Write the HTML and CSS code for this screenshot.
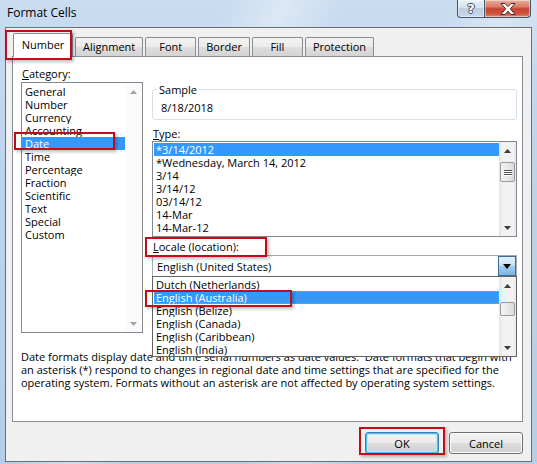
FILE: index.html
```html
<!DOCTYPE html>
<html>
<head>
<meta charset="utf-8">
<title>Format Cells</title>
<link rel="stylesheet" href="styles.css">
</head>
<body>
<div class="window">
  <div class="titlebar">
    <span class="title">Format Cells</span>
    <div class="caption-btns">
      <div class="cbtn help"><span class="qmark">?</span></div>
      <div class="cbtn close">
        <svg width="16" height="12" viewBox="0 0 16 12"><polygon points="1,0.5 5,0.5 8,3.6 11,0.5 15,0.5 10.3,5.8 15,11.5 11,11.5 8,8.2 5,11.5 1,11.5 5.7,5.8" fill="#ffffff" stroke="#4a2b2b" stroke-width="1" stroke-linejoin="round"/></svg>
      </div>
    </div>
  </div>

  <div class="dialog">
    <div class="tabs">
      <div class="tab active">Number</div>
      <div class="tab">Alignment</div>
      <div class="tab">Font</div>
      <div class="tab">Border</div>
      <div class="tab">Fill</div>
      <div class="tab">Protection</div>
    </div>

    <div class="panel">
      <div class="cols">
        <div class="col-left">
          <div class="label"><u>C</u>ategory:</div>
          <div class="listbox cat">
            <ul class="items">
              <li>General</li>
              <li>Number</li>
              <li>Currency</li>
              <li>Accounting</li>
              <li class="sel">Date</li>
              <li>Time</li>
              <li>Percentage</li>
              <li>Fraction</li>
              <li>Scientific</li>
              <li>Text</li>
              <li>Special</li>
              <li>Custom</li>
            </ul>
            <div class="vscroll plain">
              <div class="arrow"><svg width="7" height="4" viewBox="0 0 7 4"><polygon points="0,4 3.5,0 7,4" fill="#a3a3a3"/></svg></div>
              <div class="track"></div>
              <div class="arrow"><svg width="7" height="4" viewBox="0 0 7 4"><polygon points="0,0 3.5,4 7,0" fill="#a3a3a3"/></svg></div>
            </div>
          </div>
        </div>

        <div class="col-right">
          <fieldset class="sample">
            <legend>Sample</legend>
            <div class="sample-val">8/18/2018</div>
          </fieldset>

          <div class="label type-label"><u>T</u>ype:</div>
          <div class="listbox type">
            <ul class="items">
              <li class="sel">*3/14/2012</li>
              <li>*Wednesday, March 14, 2012</li>
              <li>3/14</li>
              <li>3/14/12</li>
              <li>03/14/12</li>
              <li>14-Mar</li>
              <li>14-Mar-12</li>
            </ul>
            <div class="vscroll">
              <div class="arrow"><svg width="7" height="4" viewBox="0 0 7 4"><polygon points="0,4 3.5,0 7,4" fill="#3c3c3c"/></svg></div>
              <div class="thumb t-type"><span></span><span></span><span></span></div>
              <div class="track"></div>
              <div class="arrow"><svg width="7" height="4" viewBox="0 0 7 4"><polygon points="0,0 3.5,4 7,0" fill="#3c3c3c"/></svg></div>
            </div>
          </div>

          <div class="label locale-label"><u>L</u>ocale (location):</div>
          <div class="combo-wrap">
            <div class="combo">
              <span class="combo-text">English (United States)</span>
              <div class="dd-btn"><svg width="8" height="5" viewBox="0 0 8 5"><polygon points="0,0 8,0 4,5" fill="#000"/></svg></div>
            </div>
            <div class="dropdown">
              <ul class="items">
                <li>Dutch (Netherlands)</li>
                <li class="sel focus">English (Australia)</li>
                <li>English (Belize)</li>
                <li>English (Canada)</li>
                <li>English (Caribbean)</li>
                <li>English (India)</li>
              </ul>
              <div class="vscroll">
                <div class="arrow"><svg width="7" height="4" viewBox="0 0 7 4"><polygon points="0,4 3.5,0 7,4" fill="#3c3c3c"/></svg></div>
                <div class="gap-top"></div>
                <div class="thumb t-drop"></div>
                <div class="track"></div>
                <div class="arrow"><svg width="7" height="4" viewBox="0 0 7 4"><polygon points="0,0 3.5,4 7,0" fill="#3c3c3c"/></svg></div>
              </div>
            </div>
          </div>
        </div>
      </div>

      <p class="desc">Date formats display date and time serial numbers as date values.&nbsp; Date formats that begin with an asterisk (*) respond to changes in regional date and time settings that are specified for the operating system. Formats without an asterisk are not affected by operating system settings.</p>
    </div>

    <div class="buttons">
      <button class="btn default">OK</button>
      <button class="btn">Cancel</button>
    </div>
  </div>

  <div class="mark m-tab"></div>
  <div class="mark m-date"></div>
  <div class="mark m-locale"></div>
  <div class="mark m-aus"></div>
  <div class="mark m-ok"></div>
</div>
</body>
</html>
```

FILE: styles.css
```css
* { box-sizing: border-box; }

html, body {
  margin: 0;
  padding: 0;
}

body {
  width: 537px;
  height: 464px;
  overflow: hidden;
  font-family: "Open Sans", "Noto Sans", sans-serif;
  font-size: 11px;
  color: #000;
  background: linear-gradient(180deg, #c9dcf0 0%, #bed4ec 35%, #b6cde7 100%);
}

.window {
  position: relative;
  width: 537px;
  height: 464px;
  display: flex;
  flex-direction: column;
  background:
    linear-gradient(115deg, rgba(255,255,255,0) 30%, rgba(255,255,255,0.35) 38%, rgba(255,255,255,0) 46%, rgba(255,255,255,0) 60%, rgba(255,255,255,0.3) 68%, rgba(255,255,255,0) 76%);
}

/* title bar */
.titlebar {
  height: 27px;
  display: flex;
  align-items: flex-start;
}

.title {
  margin: 5px 0 0 7px;
  font-size: 12px;
  line-height: 16px;
  color: #000;
}

.caption-btns {
  margin-left: auto;
  margin-right: 6px;
  display: flex;
}

.cbtn {
  height: 18px;
  border: 1px solid #44546a;
  border-top: none;
  display: flex;
  align-items: center;
  justify-content: center;
  box-shadow: inset 0 0 0 1px rgba(255,255,255,0.45);
}

.help {
  width: 27px;
  border-right: none;
  border-radius: 0 0 0 4px;
  background: linear-gradient(180deg, #e8eff8 0%, #d7e2ee 45%, #bccde1 50%, #c9d8e9 100%);
}

.qmark {
  font-family: "DejaVu Sans", sans-serif;
  font-weight: bold;
  font-size: 13px;
  line-height: 14px;
  color: #fff;
  text-shadow: -1px 0 #3e4a5c, 1px 0 #3e4a5c, 0 -1px #3e4a5c, 0 1px #3e4a5c;
}

.close {
  width: 47px;
  border-radius: 0 0 4px 0;
  background: linear-gradient(180deg, #eab0a0 0%, #db7a66 40%, #c8432f 52%, #cd5440 80%, #dc8a72 100%);
}

/* dialog body */
.dialog {
  flex: 1;
  margin: 0 5px 2px;
  background: #f0f0f0;
  border: 1px solid #6e6e6e;
  display: flex;
  flex-direction: column;
}

.tabs {
  height: 28px;
  display: flex;
  align-items: flex-end;
  padding-left: 7px;
  gap: 2px;
}

.tab {
  height: 19px;
  min-width: 51px;
  padding: 0 7px;
  text-align: center;
  line-height: 17px;
  border: 1px solid #898c95;
  border-bottom: none;
  border-radius: 2px 2px 0 0;
  background: linear-gradient(180deg, #f3f3f3 0%, #ebebeb 50%, #dddddd 51%, #d4d4d4 100%);
  white-space: nowrap;
}

.tab.active {
  height: 24px;
  width: 60px;
  margin-bottom: -1px;
  position: relative;
  z-index: 1;
  background: #fff;
  line-height: 22px;
}

.panel {
  margin-left: 6px;
  width: 511px;
  height: 366px;
  background: #fff;
  border: 1px solid #898c95;
}

.cols {
  display: flex;
  gap: 9px;
  padding: 10px 5px 0 8px;
}

.col-left {
  width: 122px;
  display: flex;
  flex-direction: column;
}

.col-right {
  width: 365px;
  display: flex;
  flex-direction: column;
  padding-top: 16px;
}

.label {
  line-height: 13px;
  height: 13px;
  margin-bottom: 2px;
  padding-left: 1px;
  white-space: nowrap;
}

.label u { text-decoration: underline; }

ul.items {
  list-style: none;
  margin: 0;
  flex: 1;
  min-width: 0;
}

ul.items li {
  height: 13px;
  line-height: 13px;
  white-space: nowrap;
  overflow: hidden;
}

ul.items li.sel {
  background: #3399ff;
  color: #fff;
}

.listbox {
  display: flex;
  border: 1px solid #828790;
  background: #fff;
}

.listbox.cat { height: 251px; }
.listbox.cat ul.items { padding: 2px 0 0 0; }
.listbox.cat li { padding-left: 3px; }

/* scrollbars */
.vscroll {
  width: 17px;
  display: flex;
  flex-direction: column;
  background: linear-gradient(90deg, #e3e3e3 0%, #f2f2f2 20%, #f2f2f2 80%, #e8e8e8 100%);
}

.vscroll.plain {
  background: #fbfbfb;
}

.vscroll .arrow {
  height: 17px;
  display: flex;
  align-items: center;
  justify-content: center;
}

.vscroll .track { flex: 1; }

.thumb {
  margin: 0 1px;
  border: 1px solid #9a9a9a;
  border-radius: 2px;
  background: linear-gradient(90deg, #f4f4f4 0%, #e8e8e8 50%, #dadada 100%);
  display: flex;
  flex-direction: column;
  align-items: center;
  justify-content: center;
  gap: 1px;
}

.thumb span {
  width: 8px;
  height: 1px;
  background: #555;
  box-shadow: 0 1px 0 #fff;
}

.t-type { height: 20px; margin-top: 3px; }
.gap-top { height: 8px; }
.t-drop { height: 14px; }

/* sample group */
.sample {
  margin: 0;
  height: 37px;
  padding: 5px 0 0 8px;
  border: 1px solid #d5dfe5;
  border-radius: 3px;
}

.sample legend {
  padding: 0 2px;
  margin-left: -4px;
  line-height: 13px;
}

.sample-val {
  line-height: 13px;
}

.type-label { margin-top: 7px; margin-bottom: 1px; }

.listbox.type { height: 96px; }
.listbox.type ul.items { padding: 1px 0 0 1px; }
.listbox.type li { padding-left: 2px; }

.locale-label { margin-top: 3px; margin-bottom: 2px; }

.combo-wrap { position: relative; }

.combo {
  height: 22px;
  border: 1px solid #abadb3;
  border-top-color: #a3a8ae;
  display: flex;
  align-items: center;
  background: #fff;
}

.combo-text {
  flex: 1;
  padding-left: 4px;
  line-height: 13px;
}

.dd-btn {
  width: 18px;
  height: 20px;
  border: 1px solid #3c6d95;
  background: linear-gradient(180deg, #e3f1fb 0%, #c7e3f6 45%, #a2cdee 50%, #7bb6e2 100%);
  display: flex;
  align-items: center;
  justify-content: center;
}

.dropdown {
  position: absolute;
  top: 21px;
  left: 0;
  width: 365px;
  height: 81px;
  border: 1px solid #646464;
  background: #fff;
  display: flex;
  z-index: 2;
}

.dropdown ul.items { padding: 1px 0 0 1px; }
.dropdown li { padding-left: 2px; }
.dropdown li.focus { outline: 1px dotted #e8912e; outline-offset: -1px; }

.desc {
  margin: 17px 0 0 8px;
  width: 495px;
  line-height: 13px;
}

/* buttons */
.buttons {
  display: flex;
  justify-content: flex-end;
  gap: 10px;
  padding: 10px 8px 0 0;
}

.btn {
  width: 74px;
  height: 22px;
  font-family: inherit;
  font-size: 11px;
  color: #000;
  border: 1px solid #707070;
  border-radius: 3px;
  background: linear-gradient(180deg, #f2f2f2 0%, #ebebeb 48%, #dddddd 52%, #cfcfcf 100%);
  box-shadow: inset 0 0 0 1px #fcfcfc;
  padding: 0;
}

.btn.default {
  border-color: #3c7fb1;
  box-shadow: inset 0 0 0 1px #48c0ec, inset 0 0 0 2px #c4e4f7;
}

/* red annotation boxes */
.mark {
  position: absolute;
  border: 2px solid #c20d18;
  box-shadow: 2px 2px 3px rgba(0,0,0,0.25);
  z-index: 5;
}

.m-tab { left: 5px; top: 30px; width: 67px; height: 30px; }
.m-date { left: 14px; top: 132px; width: 101px; height: 18px; }
.m-locale { left: 145px; top: 237px; width: 122px; height: 20px; }
.m-aus { left: 145px; top: 290px; width: 147px; height: 17px; }
.m-ok { left: 359px; top: 427px; width: 86px; height: 28px; }
```
